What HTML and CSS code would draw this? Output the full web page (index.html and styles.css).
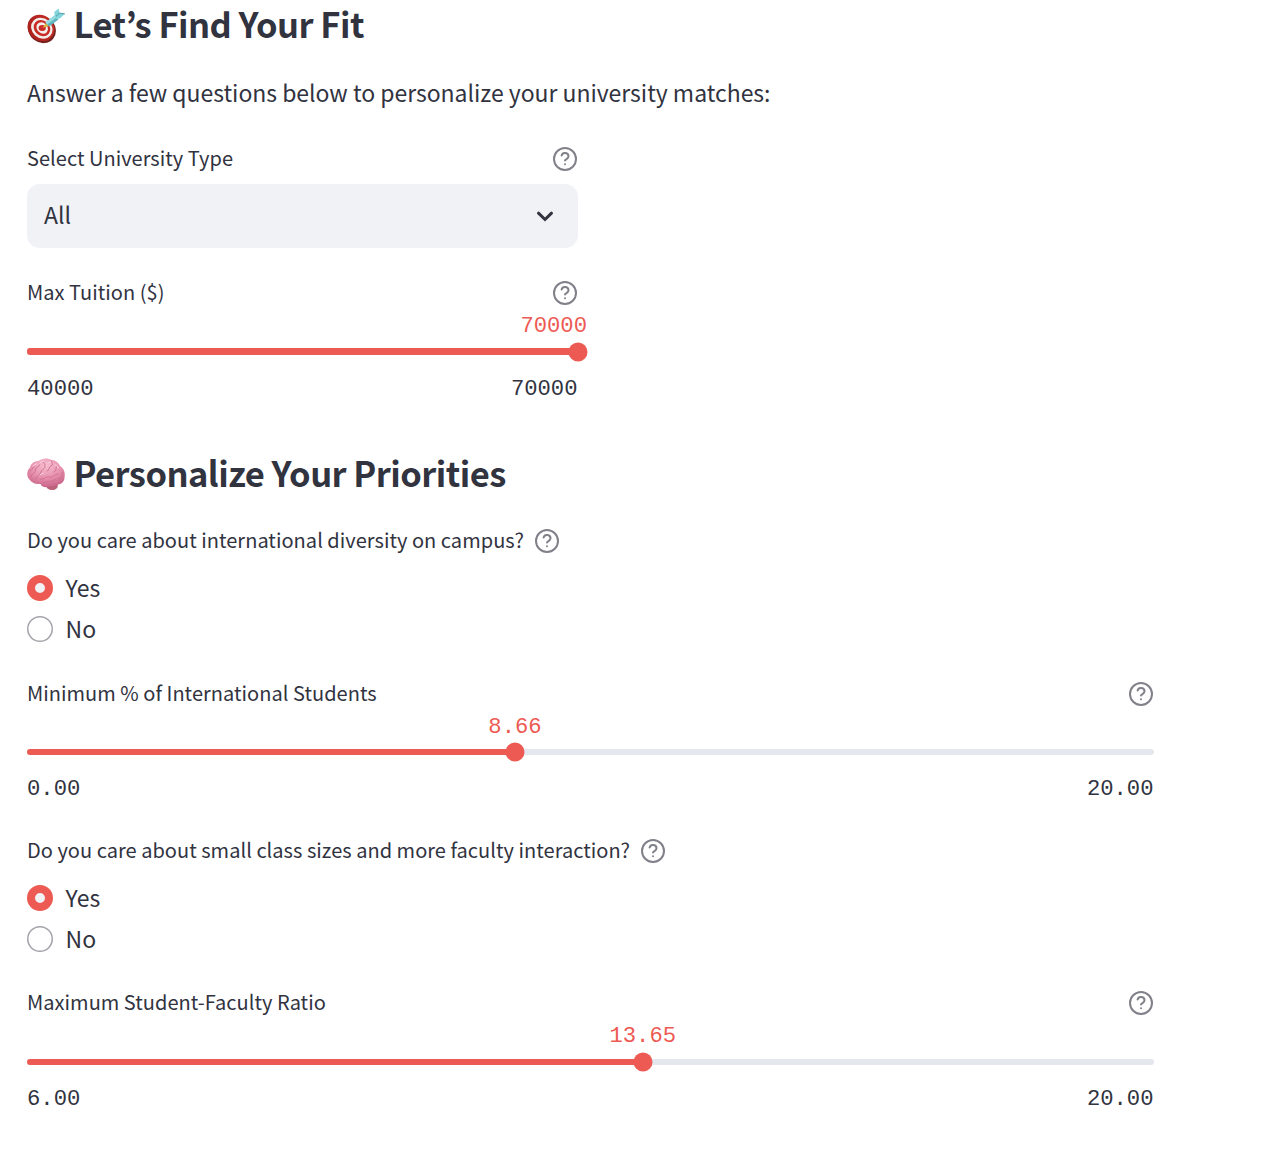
FILE: index.html
```html
<!DOCTYPE html>
<html lang="en">
<head>
<meta charset="utf-8">
<title>Let’s Find Your Fit</title>
<link rel="stylesheet" href="styles.css">
</head>
<body>
<svg class="defs" aria-hidden="true">
  <symbol id="help" viewBox="0 0 24 24">
    <g fill="none" stroke="currentColor" stroke-width="2" stroke-linecap="round" stroke-linejoin="round">
      <circle cx="12" cy="12" r="11"/>
      <path d="M8.6 8.6a3.5 3.4 0 0 1 6.900 1c0 2.200-3.500 2.900-3.500 3.900"/>
      <path d="M12 17.2h.01"/>
    </g>
  </symbol>
</svg>
<main class="page">
  <h2 class="heading">
    <svg class="emoji" viewBox="0 0 38 38" aria-hidden="true">
      <defs>
        <radialGradient id="board" cx=".6" cy=".35" r=".75"><stop offset="0" stop-color="#d5382f"/><stop offset="1" stop-color="#a51d1b"/></radialGradient>
      </defs>
      <ellipse cx="15" cy="21.600" rx="14.4" ry="13" fill="#71201d" transform="rotate(38 15 21.600)"/>
      <ellipse cx="14" cy="20" rx="14.2" ry="12.6" fill="url(#board)" transform="rotate(42 14 20)"/>
      <ellipse cx="14.8" cy="20.2" rx="11.3" ry="9.9" fill="#f4eeea" transform="rotate(42 14.8 20.2)"/>
      <ellipse cx="15" cy="20.1" rx="8.9" ry="7.6" fill="#c92c27" transform="rotate(42 15 20.1)"/>
      <ellipse cx="15.2" cy="20" rx="6.2" ry="5.2" fill="#f4eeea" transform="rotate(42 15.2 20)"/>
      <ellipse cx="15.2" cy="20" rx="3.6" ry="3" fill="#c92c27"/>
      <path d="m15.5 19.7 4-5.200 3.200 3.200z" fill="#d9b53d"/>
      <path d="m18.500 14.500 3.700 4 9.300-7-2.700-5.100z" fill="#5fb4bd"/>
      <path d="m18.500 14.500 1.700 1.900 9.300-7-.7-3z" fill="#93dce2"/>
      <path d="m28 8.500-.8-4.600L31.600.6l1 4.700 5.200.5-4.600 4.500-4.100.600z" fill="#82d4dc"/>
      <path d="m29 8.300 3.500-3.200 5.300.8" fill="none" stroke="#438d9a" stroke-width=".9"/>
    </svg>
    <span class="title">Let’s Find Your Fit</span>
  </h2>
  <p class="intro">Answer a few questions below to personalize your university matches:</p>

  <section class="narrow">
    <div class="label-row"><span class="label">Select University Type</span><svg class="help"><use href="#help"/></svg></div>
    <div class="select">
      <span class="body-text">All</span>
      <svg class="chevron" viewBox="0 0 18 12" aria-hidden="true"><path d="m2.500 3.200 6.500 6.300 6.500-6.300" fill="none" stroke="currentColor" stroke-width="3" stroke-linecap="round"/></svg>
    </div>
    <div class="slider slider-tuition">
      <div class="label-row"><span class="label">Max Tuition ($)</span><svg class="help"><use href="#help"/></svg></div>
      <div class="value-row"><span class="value value-end">70000</span></div>
      <div class="track"><div class="fill" style="width:100%"></div><span class="thumb" style="left:99.95%"></span></div>
      <div class="range"><span>40000</span><span>70000</span></div>
    </div>
  </section>

  <h2 class="heading heading-priorities">
    <svg class="emoji" viewBox="0 0 38 38" aria-hidden="true">
      <defs>
        <radialGradient id="brain" cx=".5" cy=".25" r=".75"><stop offset="0" stop-color="#f7bfd0"/><stop offset=".6" stop-color="#e58dab"/><stop offset="1" stop-color="#c86488"/></radialGradient>
      </defs>
      <path d="M19 28c1-2.600 10-3.500 11.500-.800 1.200 3-1.500 5.700-5 5.900-3.800 0-6.500-2.100-6.500-5.100z" fill="#b9627a"/>
      <path d="M2.500 22.500C-1 19 0 13 3 10.500 4 6 8 4 11.500 4 15 1 21 .700 24.500 3c4 0 7 2.500 8.300 5.800C37 11 38.500 16 37.500 20c.3 4.500-3 7.500-7.500 7.800-2.500 1.600-6 1.600-8.500 1.900-3.500 1.300-7.500-.2-8-2.900-4.500 1-8.500-.8-11-4.300z" fill="url(#brain)"/>
      <g fill="none" stroke="#cd6f90" stroke-width=".9" stroke-linecap="round">
        <path d="M4 20c1.500-5 4-3 4.500-7s3.500-2 4-5M9 22c1-4 4-3 5-7s4-2 4-6-2-2.500-2-4.500M13 22c5 1 5-3 9-2s5-3 9-3M20 14c3 0 1-4 4-5s0-3 .5-5M27 15c3-1 1-4 3-6M13.500 26.500c4 0 5-2.500 8.500-2s5-2.500 7-2M35.500 15c-1 3 .5 4-2 7M3 14c2 0 2-3 4-4M22 28c2-.5 3-2 5-2M31 21c3 0 2 3 .5 4"/>
      </g>
      <path d="M6 9c2-2 3-2 4-2M13 6c1-2 3-2 4-2M21 6c1-1 2-1 3 0M28 8c2 0 3 1 3 3M13 18c2-2 3-2 4-1" fill="none" stroke="#ffd6e2" stroke-width="1" stroke-linecap="round"/>
    </svg>
    <span class="title">Personalize Your Priorities</span>
  </h2>

  <section class="question">
    <div class="label-row inline"><span class="label">Do you care about international diversity on campus?</span><svg class="help"><use href="#help"/></svg></div>
    <div class="options">
      <div class="option"><span class="radio checked"></span><span class="body-text">Yes</span></div>
      <div class="option"><span class="radio"></span><span class="body-text">No</span></div>
    </div>
  </section>
  <div class="slider slider-international">
    <div class="label-row"><span class="label">Minimum % of International Students</span><svg class="help"><use href="#help"/></svg></div>
    <div class="value-row"><span class="value" style="left:43.3%">8.66</span></div>
    <div class="track"><div class="fill" style="width:43.3%"></div><span class="thumb" style="left:43.27%"></span></div>
    <div class="range"><span>0.00</span><span>20.00</span></div>
  </div>

  <section class="question question-faculty">
    <div class="label-row inline"><span class="label">Do you care about small class sizes and more faculty interaction?</span><svg class="help"><use href="#help"/></svg></div>
    <div class="options">
      <div class="option"><span class="radio checked"></span><span class="body-text">Yes</span></div>
      <div class="option"><span class="radio"></span><span class="body-text">No</span></div>
    </div>
  </section>
  <div class="slider slider-ratio">
    <div class="label-row"><span class="label">Maximum Student-Faculty Ratio</span><svg class="help"><use href="#help"/></svg></div>
    <div class="value-row"><span class="value" style="left:54.64%">13.65</span></div>
    <div class="track"><div class="fill" style="width:54.64%"></div><span class="thumb" style="left:54.63%"></span></div>
    <div class="range"><span>6.00</span><span>20.00</span></div>
  </div>
</main>
</body>
</html>
```
FILE: styles.css
```css
* { box-sizing: border-box; }
body {
  margin: 0;
  background: #fff;
  color: #31333f;
  font-family: "Noto Sans CJK KR", "Noto Sans", sans-serif;
}
.defs { display: none; }
.page { width: 1154px; height: 1158px; padding-left: 27px; }
.heading { display: flex; align-items: center; gap: 8.5px; height: 50px; margin: 0; }
.emoji { width: 38px; height: 38px; flex: none; margin-top: 3px; }
.title { margin-top: -4px; font-size: 34.5px; font-weight: 700; line-height: 50px; letter-spacing: -0.54px; white-space: nowrap; }
.intro { margin: 23px 0 32px; font-size: 23px; line-height: 38px; letter-spacing: -0.03px; white-space: nowrap; }
.narrow { width: 551px; }
.label-row { display: flex; align-items: center; justify-content: space-between; height: 32px; padding-right: 1px; }
.label-row.inline { justify-content: flex-start; gap: 11px; }
.label { margin-top: -2px; font-size: 20px; line-height: 32px; letter-spacing: 0.03px; white-space: nowrap; }
.help { width: 24px; height: 24px; color: #808189; flex: none; }
.body-text { margin-top: -2px; font-size: 23px; line-height: 38px; }
.select {
  display: flex; align-items: center; justify-content: space-between;
  height: 64px; margin-top: 9px; padding: 0 24px 0 17px;
  border-radius: 13px; background: #f0f2f6;
}
.select .body-text { margin-top: -4px; }
.chevron { width: 18px; height: 12px; }
.slider-tuition { margin-top: 29px; }
.value-row { position: relative; height: 32px; }
.value, .range { font-family: "Liberation Mono", monospace; font-size: 22.2px; line-height: 32px; }
.value { position: absolute; top: 2px; color: #ed5a53; transform: translateX(-50%); }
.value-end { right: -9px; transform: none; }
.track { position: relative; height: 6px; margin-top: 7px; border-radius: 3px; background: #e4e7ee; }
.slider-tuition .track { height: 7px; border-radius: 4px; }
.fill { height: 100%; border-radius: 3px 0 0 3px; background: #ed5a53; }
.thumb { position: absolute; top: 50%; width: 19px; height: 19px; border-radius: 50%; background: #ed5a53; transform: translate(-50%, -50%); }
.range { display: flex; justify-content: space-between; margin-top: 19px; padding-right: 0.5px; }
.heading-priorities { margin-top: 43px; }
.question { margin-top: 26px; }
.options { display: flex; flex-direction: column; gap: 3px; margin-top: 12px; }
.option { display: flex; align-items: center; gap: 12.5px; height: 38px; }
.radio { width: 26px; height: 26px; border-radius: 50%; box-shadow: inset 0 0 0 1.5px #a3a4aa; }
.radio.checked { border: 8px solid #ed5a53; background: #f0f2f6; box-shadow: none; }
.slider-international { margin-top: 30px; }
.question-faculty { margin-top: 29px; }
.slider-ratio { margin-top: 29px; }
.slider-ratio .track { margin-top: 8px; }
```
